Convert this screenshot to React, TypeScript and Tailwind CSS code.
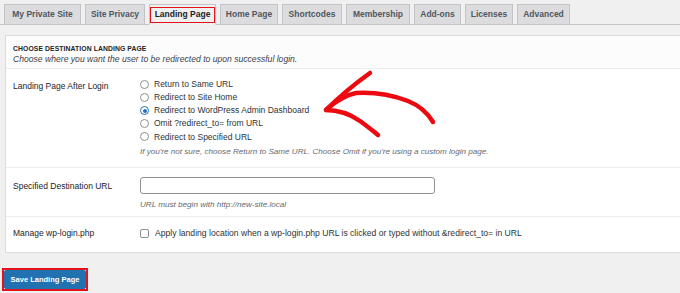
import React from 'react';

const TABS = [
  { label: 'My Private Site', w: 'w-[77px]' },
  { label: 'Site Privacy', w: 'w-[60px]' },
  { label: 'Landing Page', w: 'w-[67px]', active: true },
  { label: 'Home Page', w: 'w-[58px]' },
  { label: 'Shortcodes', w: 'w-[60px]' },
  { label: 'Membership', w: 'w-[64px]' },
  { label: 'Add-ons', w: 'w-[47px]' },
  { label: 'Licenses', w: 'w-[48px]' },
  { label: 'Advanced', w: 'w-[53px]' },
];

const OPTIONS = [
  'Return to Same URL',
  'Redirect to Site Home',
  'Redirect to WordPress Admin Dashboard',
  'Omit ?redirect_to= from URL',
  'Redirect to Specified URL',
];

const Radio = ({ checked }: { checked?: boolean }) => (
  <span
    className={`w-[9px] h-[9px] rounded-full border bg-white flex items-center justify-center shrink-0 ${
      checked ? 'border-[#2271b1]' : 'border-[#8c8f94]'
    }`}
  >
    {checked && <span className="w-[4px] h-[4px] rounded-full bg-[#2271b1]" />}
  </span>
);

export default function App() {
  return (
    <div
      className="relative w-[680px] h-[293px] overflow-hidden bg-[#f0f0f1] text-[#1d2327]"
      style={{ fontFamily: '"Liberation Sans", Arial, sans-serif' }}
    >
      {/* Tabs */}
      <div className="flex gap-[4px] pl-[4px] pt-[4px] border-b border-[#c3c4c7]">
        {TABS.map((t) => (
          <div
            key={t.label}
            className={`${t.w} h-[21px] -mb-px border border-[#c3c4c7] flex items-center justify-center whitespace-nowrap text-[8.5px] font-semibold ${
              t.active ? 'bg-[#f0f0f1] border-b-[#f0f0f1] text-[#1d2327]' : 'bg-[#dcdcde] text-[#50575e]'
            }`}
          >
            {t.active ? (
              <span className="border-[1.5px] border-[#e3131b] px-[4px] h-[16px] leading-[13px] whitespace-nowrap">
                {t.label}
              </span>
            ) : (
              t.label
            )}
          </div>
        ))}
      </div>

      {/* Settings panel */}
      <div className="mt-[10px] ml-[5px] w-[690px] bg-white border border-[#dcdcde]">
        <div className="bg-[#fcfcfc] px-[7px] pt-[8px] pb-[3px] border-b border-[#ececec]">
          <div className="text-[6.8px] font-semibold uppercase leading-[10px] tracking-[0.1px]">
            Choose destination landing page
          </div>
          <div className="text-[8.6px] italic leading-[11px] text-[#3c434a]">
            Choose where you want the user to be redirected to upon successful login.
          </div>
        </div>

        {/* Landing page after login */}
        <div className="flex px-[7px] pt-[9px] pb-[10px] border-b border-[#ececec] text-[8.5px]">
          <div className="w-[127px] shrink-0 pt-[1.5px] leading-[13px]">Landing Page After Login</div>
          <div>
            {OPTIONS.map((o, i) => (
              <div key={o} className="flex items-center gap-[5px] h-[13.1px]">
                <Radio checked={i === 2} />
                <span className="text-[#2c3338]">{o}</span>
              </div>
            ))}
            <div className="mt-[3px] text-[8.1px] italic leading-[11px] text-[#646970]">
              If you're not sure, choose Return to Same URL. Choose Omit if you're using a custom login page.
            </div>
          </div>
        </div>

        {/* Specified destination */}
        <div className="flex px-[7px] pt-[9px] pb-[6px] border-b border-[#ececec] text-[8.5px]">
          <div className="w-[127px] shrink-0 pt-[2.5px] leading-[13px]">Specified Destination URL</div>
          <div>
            <div className="w-[295px] h-[17px] border border-[#8c8f94] rounded-[3px] bg-white" />
            <div className="mt-[4.5px] text-[8.1px] italic leading-[11px] text-[#646970]">
              URL must begin with http://new-site.local
            </div>
          </div>
        </div>

        {/* wp-login */}
        <div className="flex px-[7px] pt-[9.5px] pb-[12px] text-[8.5px] leading-[13px]">
          <div className="w-[127px] shrink-0 pt-[1px]">Manage wp-login.php</div>
          <div className="flex items-center gap-[6px]">
            <span className="w-[9px] h-[9px] rounded-[2px] border border-[#8c8f94] bg-white shrink-0" />
            <span className="text-[8.6px] text-[#2c3338]">
              Apply landing location when a wp-login.php URL is clicked or typed without &amp;redirect_to= in URL
            </span>
          </div>
        </div>
      </div>

      {/* Save button */}
      <div className="mt-[15px] ml-[2px] inline-flex border-2 border-[#e3131b]">
        <button className="w-[82px] h-[19px] bg-[#2271b1] border border-[#2271b1] rounded-[2px] text-white text-[7.5px] font-semibold">
          Save Landing Page
        </button>
      </div>

      {/* Hand-drawn arrow */}
      <svg className="absolute inset-0 pointer-events-none" width="680" height="293" viewBox="0 0 680 293">
        <g fill="none" stroke="#ec0a10" strokeWidth="4.5" strokeLinecap="round" strokeLinejoin="round">
          <path d="M433 122 C427 112 418 105 408 101 C392 95 372 92 356 93 C346 95 336 101 327 109" />
          <path d="M370 73 C356 83 340 96 326 110" />
          <path d="M326 110 C338 110 350 114 360 121 C367 126 373 131 378 135" />
        </g>
      </svg>
    </div>
  );
}
